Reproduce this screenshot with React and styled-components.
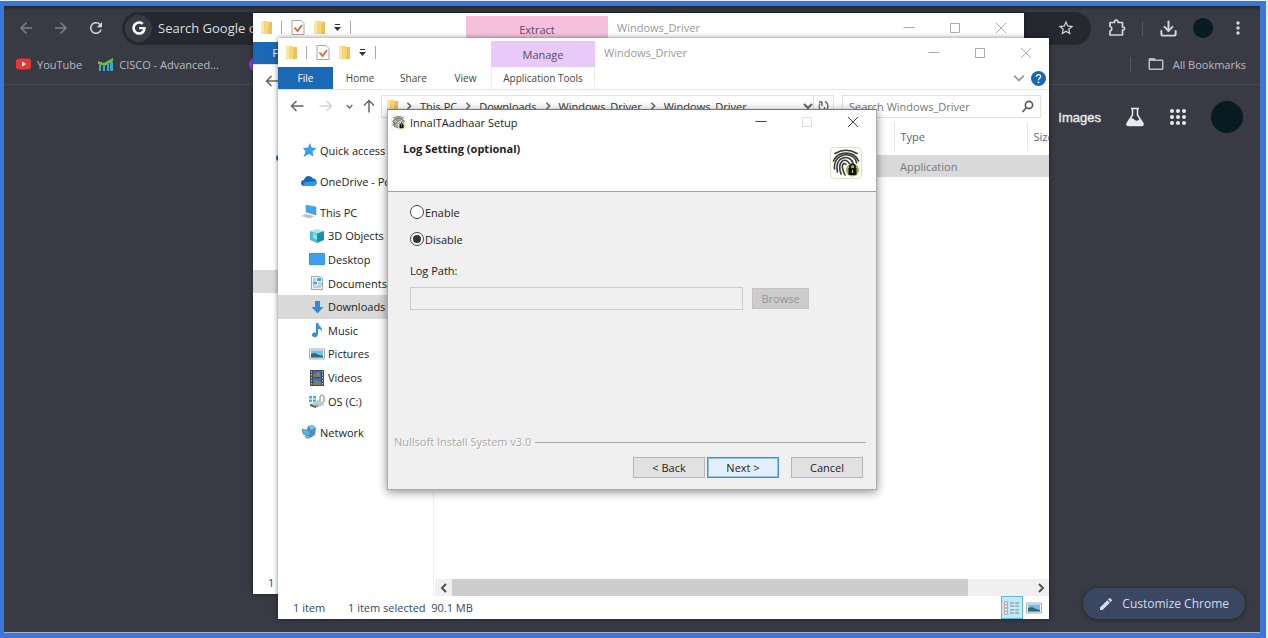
import React, { useState } from 'react';
import styled, { createGlobalStyle, css } from 'styled-components';
import { Download } from 'lucide-react';
import { FaGoogle } from 'react-icons/fa';
import {
  MdArrowBack,
  MdArrowForward,
  MdEdit,
  MdFolderOpen,
  MdMoreVert,
  MdRefresh,
  MdStarOutline,
} from 'react-icons/md';

const GlobalStyle = createGlobalStyle`
  *,
  *::before,
  *::after {
    box-sizing: border-box;
  }

  body {
    display: flow-root;
    margin: 0;
    overflow: hidden;
    background: #e4f1f8;
    font-family: 'Open Sans', 'Noto Sans', sans-serif;
    font-size: 12px;
  }

  button,
  input {
    font: inherit;
    color: inherit;
  }

  svg {
    display: block;
    flex: none;
  }
`;

const StyledFrame = styled.div`
  position: relative;
  display: flex;
  flex-direction: column;
  min-height: calc(100vh - 1px);
  margin: 1px 2px 0 0;
  border: solid #3b77d8;
  border-width: 5px 6px 5px 4px;
  background: #383b43;
  box-shadow: inset 0 4px 3px -2px #25272c, inset 0 -1px 0 #a5b3cb;
`;

const PlainButton = styled.button`
  display: flex;
  align-items: center;
  justify-content: center;
  flex: none;
  width: ${({ $width }) => $width || 24}px;
  padding: 0;
  border: 0;
  background: none;
`;

/* ---------- browser ---------- */

const StyledToolbar = styled.header`
  display: flex;
  align-items: center;
  height: 44px;
  padding: 0 10px;
  color: #d4d6dc;

  .nav {
    display: flex;
    gap: 11px;
    margin-right: 14px;
  }

  .dim {
    color: #7d8088;
  }
`;

const StyledOmnibox = styled.label`
  display: flex;
  align-items: center;
  flex: 1;
  height: 33px;
  margin-right: 14px;
  padding: 0 16px 0 3px;
  border-radius: 17px;
  background: #25282e;

  .badge {
    display: grid;
    place-items: center;
    width: 27px;
    height: 27px;
    border-radius: 50%;
    background: #383b42;
    color: #fff;
  }

  input {
    flex: 1;
    margin-left: 6px;
    padding: 0;
    border: 0;
    outline: 0;
    background: none;
    font-size: 13px;
  }

  input::placeholder {
    color: #dcdee2;
    opacity: 1;
  }
`;

const StyledDivider = styled.span`
  flex: none;
  width: 1px;
  height: ${({ $height }) => $height || 15}px;
  background: ${({ $color }) => $color || '#555862'};
`;

const StyledActions = styled.div`
  display: flex;
  align-items: center;
  gap: 13px;
`;

const Avatar = styled.button`
  flex: none;
  width: ${({ $size }) => $size}px;
  height: ${({ $size }) => $size}px;
  padding: 0;
  border: 0;
  border-radius: 50%;
  background: #061c22;
`;

const StyledBookmarks = styled.nav`
  display: flex;
  align-items: center;
  height: 35px;
  padding: 0 14px 6px 12px;
  border-bottom: 1px solid #464951;
  color: #b9bcc4;
  font-size: 11px;

  a {
    display: flex;
    align-items: center;
    gap: 6px;
    margin-right: 16px;
    color: inherit;
    text-decoration: none;
  }

  .purple {
    width: 15px;
    height: 15px;
    margin-left: 14px;
    border-radius: 50%;
    background: #8a3fe0;
  }

  .all {
    gap: 8px;
    margin: 0 0 0 16px;
  }

  ${StyledDivider} {
    margin-left: auto;
  }
`;

const StyledNewTab = styled.main`
  display: flex;
  flex: 1;
  flex-direction: column;
  align-items: flex-end;
  justify-content: space-between;
  padding: 16px 15px 14px;
`;

const StyledLinks = styled.div`
  display: flex;
  align-items: center;
  gap: 24px;
  padding-right: 2px;
  color: #e8eaee;

  a {
    color: inherit;
    font-family: 'Liberation Sans', sans-serif;
    font-size: 13px;
    -webkit-text-stroke: 0.4px;
    text-decoration: none;
  }
`;

const StyledCustomize = styled.button`
  display: flex;
  align-items: center;
  gap: 8px;
  height: 31px;
  padding: 0 16px 0 15px;
  border: 0;
  border-radius: 16px;
  background: #3b4761;
  box-shadow: 0 1px 4px #24262b;
  color: #d3dcf0;
`;

/* ---------- explorer windows ---------- */

const StyledWindow = styled.section`
  position: absolute;
  left: ${({ $x }) => $x}px;
  top: ${({ $y }) => $y}px;
  display: flex;
  flex-direction: column;
  width: ${({ $width }) => $width}px;
  height: ${({ $height }) => $height}px;
  background: #fff;
  box-shadow: 0 0 5px rgba(0, 0, 0, 0.5);
  overflow: hidden;
`;

const StyledTitleBar = styled.header`
  display: flex;
  align-items: center;
  flex: none;
  height: 29px;
  padding-left: 8px;
  color: #999;

  .quick {
    display: flex;
    align-items: center;
    gap: 9px;
    width: 205px;
  }

  h2 {
    flex: 1;
    margin: 0 0 0 9px;
    font-size: 11px;
    font-weight: 400;
  }
`;

const StyledToolTab = styled.span`
  align-self: flex-end;
  width: ${({ $wide }) => ($wide ? 142 : 104)}px;
  height: 26px;
  background: ${({ $wide }) => ($wide ? '#f5c0dc' : '#e8c9fa')};
  color: #5c4a66;
  font-size: 11px;
  line-height: 28px;
  text-align: center;
`;

const StyledRibbon = styled.nav`
  display: flex;
  align-items: stretch;
  flex: none;
  height: 23px;
  border-bottom: 1px solid #e4e4e4;

  .end {
    display: flex;
    align-items: center;
    gap: 6px;
    margin-left: auto;
    padding-right: 3px;
  }
`;

const RibbonTab = styled.button`
  width: ${({ $width }) => $width}px;
  padding: 0;
  border: 0;
  background: none;
  color: #444;
  font-size: 10px;

  ${({ $file }) =>
    $file &&
    css`
      background: #1b69b6;
      color: #fff;
    `}

  ${({ $tool }) =>
    $tool &&
    css`
      border: solid #ececec;
      border-width: 0 1px;
    `}
`;

const StyledAddressRow = styled.div`
  display: flex;
  align-items: center;
  flex: none;
  height: 32px;
  padding: 0 8px;

  .arrows {
    display: flex;
    align-items: center;
    width: 95px;
    color: #666;
  }

  .path {
    display: flex;
    align-items: center;
    flex: 1;
    height: 23px;
    padding-left: 5px;
    border: 1px solid #e2e2e2;
    color: #333;
    font-size: 11px;
  }

  .path span {
    white-space: nowrap;
  }

  .path .sep {
    width: 22px;
    padding: 0 7px;
    color: #666;
  }

  .path .space {
    flex: 1;
  }

  .refresh {
    height: 21px;
    border-left: 1px solid #e2e2e2;
  }
`;

const StyledSearch = styled.label`
  display: flex;
  align-items: center;
  width: 199px;
  height: 23px;
  margin-left: 8px;
  padding: 0 6px;
  border: 1px solid #e2e2e2;

  input {
    flex: 1;
    min-width: 0;
    padding: 0;
    border: 0;
    outline: 0;
    font-size: 11px;
  }

  input::placeholder {
    color: #777;
    opacity: 1;
  }
`;

const StyledBody = styled.div`
  display: grid;
  grid-template-columns: 156px 1fr;
  flex: 1;
  min-height: 0;
`;

const StyledSidebar = styled.nav`
  display: flex;
  flex-direction: column;
  gap: 7px;
  padding-top: 16px;
  border-right: 1px solid #f0f0f0;

  .group {
    display: grid;
    grid-auto-rows: 1fr;
    height: 213px;
  }
`;

const SideItem = styled.a`
  display: flex;
  align-items: center;
  gap: 3px;
  min-height: ${({ $nested }) => ($nested ? 23 : 24)}px;
  padding-left: ${({ $nested }) => ($nested ? 31 : 23)}px;
  background: ${({ $active }) => ($active ? '#d9d9d9' : 'none')};
  color: #222;
  font-size: 11px;
  text-decoration: none;
  white-space: nowrap;
`;

const StyledContent = styled.div`
  display: flex;
  flex-direction: column;
  justify-content: space-between;
  min-width: 0;
  padding-left: 1px;
  overflow: hidden;
`;

const StyledFileTable = styled.table`
  width: 100%;
  border-collapse: collapse;
  table-layout: fixed;
  font-size: 11px;

  th {
    height: 29px;
    padding: 0 0 0 6px;
    border-left: 1px solid #e8e8e8;
    color: #566780;
    font-weight: 400;
    text-align: left;
  }

  th:first-child {
    border: 0;
  }

  tbody::before {
    content: '';
    display: block;
    height: 4px;
  }

  td {
    height: 22px;
    padding: 0 0 0 6px;
    background: #d9d9d9;
    color: #777;
  }
`;

const StyledScrollbar = styled.div`
  display: flex;
  height: 17px;
  background: #f0f0f0;
  color: #505050;

  .thumb {
    width: 516px;
    background: #cdcdcd;
  }

  button:last-child {
    margin-left: auto;
  }
`;

const StyledStatus = styled.footer`
  display: flex;
  align-items: center;
  flex: none;
  height: 23px;
  padding: 0 4px 0 15px;
  color: #33476b;
  font-size: 11px;

  span {
    white-space: pre;
  }

  .count {
    width: 55px;
  }

  .selected {
    flex: 1;
  }
`;

const ViewButton = styled(PlainButton)`
  height: 23px;
  border: 1px solid ${({ $active }) => ($active ? '#5db8e0' : 'transparent')};
  background: ${({ $active }) => ($active ? '#c3e8f8' : 'none')};
`;

/* ---------- setup dialog ---------- */

const StyledDialog = styled(StyledWindow)`
  border: 1px solid #a9a9a9;
  border-top-color: #777;
  background: #f0f0f0;
  box-shadow: 0 2px 9px rgba(0, 0, 0, 0.45);
  color: #222;
  font-size: 11px;

  .caption {
    display: flex;
    align-items: center;
    height: 24px;
    padding-left: 3px;
    background: #fff;
  }

  .caption h2 {
    flex: 1;
    margin: 0 0 0 4px;
    font-size: 11px;
    font-weight: 400;
  }

  .heading {
    display: flex;
    justify-content: space-between;
    height: 58px;
    padding: 7px 14px 0 15px;
    border-bottom: 1px solid #a0a0a0;
    background: #fff;
  }

  .heading h3 {
    margin: 0;
    font-size: 11px;
    line-height: 15px;
  }

  .heading svg {
    margin-top: 6px;
  }
`;

const StyledForm = styled.form`
  display: flex;
  flex: 1;
  flex-direction: column;
  padding: 10px 10px 11px 22px;

  .path-label {
    margin-top: 12px;
    line-height: 20px;
  }

  .path-row {
    display: flex;
    gap: 9px;
    margin-top: 6px;
  }

  .path-row input {
    width: 333px;
    height: 23px;
    border: 1px solid #ccc;
    background: #f0f0f0;
  }

  .brand {
    display: flex;
    align-items: center;
    gap: 4px;
    margin: auto 0 0 -16px;
    color: #a9a9a9;
    line-height: 16px;
    text-shadow: 1px 1px #fff;
  }

  .brand::after {
    content: '';
    flex: 1;
    height: 1px;
    background: #a6a6a6;
  }

  .buttons {
    display: flex;
    justify-content: flex-end;
    gap: 2px;
    margin: 7px 3px 0 0;
  }

  .buttons button:last-child {
    margin-left: 10px;
  }
`;

const RadioLabel = styled.label`
  display: flex;
  align-items: center;
  gap: 1px;
  height: 20px;
  margin-bottom: 7px;

  & + & {
    margin-bottom: 0;
  }

  input {
    display: grid;
    place-items: center;
    width: 14px;
    height: 14px;
    margin: 0;
    border: 1px solid #444;
    border-radius: 50%;
    background: #fff;
    appearance: none;
  }

  input:checked::before {
    content: '';
    width: 8px;
    height: 8px;
    border-radius: 50%;
    background: #333;
  }
`;

const DialogButton = styled.button`
  width: ${({ $small }) => ($small ? 57 : 72)}px;
  height: 21px;
  padding: 0;
  border: 1px solid ${({ $primary }) => ($primary ? '#3c8fdc' : '#b5b5b5')};
  background: ${({ $primary }) => ($primary ? '#e3f0fb' : '#e1e1e1')};
  box-shadow: ${({ $primary }) => ($primary ? 'inset 0 0 0 1px #8fc1ee' : 'none')};

  &:disabled {
    margin-top: 1px;
    border-color: #c4c4c4;
    background: #ccc;
    color: #949494;
  }
`;

/* ---------- drawings ---------- */

const FolderIcon = () => (
  <svg width="11" height="15" viewBox="0 0 11 15">
    <path d="M0 1h7l1 1h3v12H0z" fill="#f7d678" />
    <path d="M0 1h3v12l2 2-5-2z" fill="#fbe7a6" />
    <path d="M8 2h3v12H7z" fill="#ecc05a" />
  </svg>
);

const CheckDocIcon = () => (
  <svg width="14" height="15" viewBox="0 0 14 15" fill="none">
    <path d="M1 .5h9l3 3v11H1z" fill="#fff" stroke="#a5a5a5" />
    <path d="M3.500 7.500l3 3.500 4.500-6" stroke="#e2643a" strokeWidth="1.800" />
  </svg>
);

const CaretIcon = () => (
  <svg width="7" height="7" viewBox="0 0 7 7" fill="#333">
    <path d="M1 0h5v1H1zM0 3h7L3.500 7z" />
  </svg>
);

const CHEVRONS = {
  down: 'M1 3l4 4 4-4',
  left: 'M7 1L3 5l4 4',
  right: 'M3 1l4 4-4 4',
};

const Chevron = ({ dir, size = 10, color = 'currentColor', weight = 1.5 }) => (
  <svg width={size} height={size} viewBox="0 0 10 10" fill="none" stroke={color} strokeWidth={weight}>
    <path d={CHEVRONS[dir]} />
  </svg>
);

const ArrowIcon = ({ turn = 0, color = '#666' }) => (
  <svg width="14" height="14" viewBox="0 0 14 14" fill="none" stroke={color} strokeWidth="1.500">
    <path d="M13.500 7H1.500M6.500 2L1.500 7l5 5" transform={`rotate(${turn} 7 7)`} />
  </svg>
);

const RefreshIcon = () => (
  <svg width="11" height="12" viewBox="0 0 11 12" fill="none" stroke="#666" strokeWidth="1.400">
    <path d="M4 2v4M1 2h3.500M2 3.500C.5 6 1 9 3.500 10.500M7 1.500C10.500 3 11 8 8 10.500M6.500 7v3.500H10" />
  </svg>
);

const SearchIcon = () => (
  <svg width="13" height="13" viewBox="0 0 13 13" fill="none" stroke="#555" strokeWidth="1.600">
    <circle cx="8" cy="5" r="3.600" />
    <path d="M5.500 7.500L1.500 12" />
  </svg>
);

const HelpIcon = () => (
  <svg width="15" height="15" viewBox="0 0 15 15">
    <circle cx="7.500" cy="7.500" r="7.500" fill="#1767b8" />
    <path d="M5.300 5.800C5.300 2.800 9.700 2.900 9.700 5.600 9.700 7.300 7.500 7.300 7.500 9.200" fill="none" stroke="#fff" strokeWidth="1.300" />
    <circle cx="7.500" cy="11.300" r=".9" fill="#fff" />
  </svg>
);

const YouTubeIcon = () => (
  <svg width="15" height="12" viewBox="0 0 15 12">
    <rect y=".5" width="15" height="11" rx="3" fill="#ec3434" />
    <path d="M6 3.500L10 6 6 8.500z" fill="#fff" />
  </svg>
);

const ChartIcon = () => (
  <svg width="15" height="13" viewBox="0 0 15 13">
    <path d="M1 7h2v6H1zM5 8h2v5H5zM9 6h2v7H9zM12 4h3v9h-3z" fill="#38a9c9" />
    <path d="M0 3l6 2 9-5v3L6.500 8 0 6z" fill="#6fbf3c" />
  </svg>
);

const PuzzleIcon = () => (
  <svg width="18" height="18" viewBox="0 0 18 18">
    <path
      d="M2 3.500h4.500V3a1.800 1.800 0 013.600 0v.5h4.400V8h.5a1.600 1.600 0 010 3.200h-.5V16H2v-4a2.300 2.300 0 000-4.500z"
      fill="none"
      stroke="currentColor"
      strokeWidth="1.700"
      strokeLinejoin="round"
    />
  </svg>
);

const FlaskIcon = () => (
  <svg width="20" height="20" viewBox="0 0 20 20" fill="none">
    <path d="M6 1.500h8M7.500 2v6L2 16.500Q1.500 18.500 3.500 18.500h13q2 0 1.500-2L12.500 8V2" stroke="#e8eaee" strokeWidth="1.500" />
    <path d="M5.500 11q2.500 0 4.500 2t5-1l3 5q0 1.500-2 1.500h-13q-2 0-1-2z" fill="#e8eaee" />
  </svg>
);

const AppsIcon = () => (
  <svg width="18" height="18" viewBox="0 0 18 18" fill="currentColor">
    {[3, 9, 15].map(cy => [3, 9, 15].map(cx => <circle key={`${cx}-${cy}`} cx={cx} cy={cy} r="2" />))}
  </svg>
);

const SIDE_DRAWINGS = {
  star: <path d="M9 1l1.500 4.500 5 .5-4 3.500 1 5-4.500-2.500L2.500 15l2-5.500L2 6l5-.5z" fill="#36a0ee" />,
  cloud: (
    <>
      <path d="M3 13a3 3 0 010-6c1-5 7-5 9-1.500 5 0 5 7.500 0 7.500z" fill="#1769c0" />
      <path d="M3 13C1 9 6 8 8 9l6-1c3 2 1 5-2 5z" fill="#2c9be8" />
    </>
  ),
  pc: (
    <>
      <path d="M5 1l10 2v8L5 8z" fill="#3aa6ee" stroke="#7b8fa0" strokeWidth=".6" />
      <path d="M0 12l5-2 8 2-4 2.500z" fill="#b9c1c8" />
    </>
  ),
  cube: (
    <>
      <path d="M8 1l7 2-7 2.500L1 3z" fill="#a5e8f0" />
      <path d="M1 3l7 2.500V15l-7-3z" fill="#49bdd2" />
      <path d="M15 3L8 5.500V15l7-3z" fill="#198fa9" />
      <path d="M4 5l4 2v5l-4-2z" fill="#8be2ec" />
    </>
  ),
  desktop: (
    <>
      <rect x="0" y="2" width="16" height="12" rx="1" fill="#2f95ea" />
      <path d="M1 3h14v10H1z" fill="#3fa0f2" />
    </>
  ),
  doc: (
    <>
      <path d="M2.500 1.500h9l2 2v11h-11z" fill="#eef3f7" stroke="#9aa8b4" />
      <path d="M4 4h3M4 6h3M9 8h4M4 10h3M9 10h4M4 12h8" stroke="#86aecb" />
      <path d="M8 3h4v3H8zM4 7h4v2H4z" fill="#4ea2d8" />
    </>
  ),
  down: <path d="M6 2h5v6h3.500l-6 6.500L2.500 8H6z" fill="#2b8be0" />,
  music: <path d="M7 1h2c0 3 5 4 4 9-1-3-2-3-4-3v5c0 4-6 4-6 1 0-2 2-3 4-2z" fill="#2b8fe4" />,
  picture: (
    <>
      <path d="M.5 3h15v10H.5z" fill="#eef4f8" stroke="#a2afb8" />
      <path d="M2 4.500h12v7H2z" fill="#78bce8" />
      <path d="M2 11.500V8l4-1 4 2 4 1v1.500z" fill="#2e6674" />
    </>
  ),
  video: (
    <>
      <path d="M1 0h14v16H1z" fill="#474a55" />
      <path d="M4 1h8v6H4z" fill="#2f70c8" />
      <path d="M4 8h8v7H4z" fill="#3a6dc1" />
      <path d="M4 5l4-2 4 3v1H4zM4 13l5-2 3 1v3H4z" fill="#6f8a52" />
      <path d="M7 4l2-2 2 3zM5 11l2-1 2 2z" fill="#d27a3c" />
      <path d="M2.500 1v15M13.500 1v15" stroke="#bfc3ca" strokeDasharray="1.500 1.500" />
    </>
  ),
  drive: (
    <>
      <path d="M0 3h3v2.500H0zM4 3h3v2.500H4zM0 6.500h3V9H0zM4 6.500h3V9H4z" fill="#35b3e8" />
      <path d="M1 11l8-4 6 2v3l-8 3-6-2z" fill="#c3c9cd" />
      <path d="M1 11l6 2v2l-6-2z" fill="#5c646b" />
      <path d="M11 8V4q2-4 4 0v5" fill="none" stroke="#a9aeb3" strokeWidth="1.600" />
      <circle cx="8" cy="12.500" r="1" fill="#50b65a" />
    </>
  ),
  network: (
    <>
      <path d="M7 2l5-1 3 3-1 7-5 3-5-3z" fill="#4f8fbf" />
      <path d="M8 2l4-1 2 3-4 2z" fill="#7cc3e8" />
      <path d="M1 5l8 2v5l-7-2z" fill="#56b8e6" stroke="#367ca6" strokeWidth=".6" />
      <path d="M3 12l5 0 2 2-4 1z" fill="#8fa9ba" />
    </>
  ),
};

const SideIcon = ({ name }) => (
  <svg width="16" height="16" viewBox="0 0 16 16">
    {SIDE_DRAWINGS[name]}
  </svg>
);

const DetailsIcon = () => (
  <svg width="16" height="14" viewBox="0 0 16 14" fill="none">
    <path d="M.5.500h3v13h-3z" fill="#f6eeee" stroke="#b8a8a8" />
    <path d="M6 2h4M11 2h4M6 5h4M11 5h4M6 9h4M11 9h4M6 12h4M11 12h4" stroke="#7d8a93" />
    <path d="M1.500 3.500h1M1.500 7h1M1.500 10.500h1" stroke="#d24a3c" strokeWidth="1.500" />
  </svg>
);

const FingerprintIcon = ({ size }) => (
  <svg width={size} height={size} viewBox="0 0 32 32" fill="none">
    <rect x=".5" y=".5" width="31" height="31" rx="4" fill="#fdfdfa" stroke="#dcdfcd" />
    <g stroke="#3a3a3a" strokeWidth="1.600" strokeLinecap="round">
      <path d="M5 6.500Q16 0 27 6.500" />
      <path d="M3.500 14C8 3.500 24 3.500 28.500 14" />
      <path d="M4.500 22C3 4.500 25 4 26.500 16" />
      <path d="M7.500 25C4 8.500 20 7 23 16" />
      <path d="M11 27C6.500 13.500 16 9.500 19.500 17" />
      <path d="M15 28C10.500 19 12.500 14.500 16 17.500" />
    </g>
    <circle cx="22.500" cy="23" r="6.500" fill="#9db43f" />
    <path d="M20 21v-2q2.500-4 5 0v2" stroke="#111" strokeWidth="1.700" />
    <path d="M18.500 21h8v7h-8z" fill="#111" />
    <path d="M22.500 23v3" stroke="#b9c878" strokeWidth="1.200" />
  </svg>
);

const CONTROL_PATHS = {
  Minimize: 'M.5 5.500h11',
  Maximize: 'M1.500 1.500h9v9h-9z',
  Close: 'M1 1l10 10M11 1L1 11',
};

const WindowControls = ({ color, fadedMax }) =>
  Object.entries(CONTROL_PATHS).map(([name, d]) => (
    <PlainButton key={name} type="button" aria-label={name} $width={46}>
      <svg width="12" height="12" viewBox="0 0 12 12" fill="none">
        <path d={d} stroke={fadedMax && name === 'Maximize' ? '#ddd' : color} />
      </svg>
    </PlainButton>
  ));

/* ---------- sections ---------- */

const PC_ITEMS = [
  ['This PC', 'pc'],
  ['3D Objects', 'cube'],
  ['Desktop', 'desktop'],
  ['Documents', 'doc'],
  ['Downloads', 'down'],
  ['Music', 'music'],
  ['Pictures', 'picture'],
  ['Videos', 'video'],
  ['OS (C:)', 'drive'],
];

const CRUMBS = ['This PC', 'Downloads', 'Windows_Driver', 'Windows_Driver'];

const TitleBar = ({ tab, wideTab }) => (
  <StyledTitleBar>
    <div className="quick">
      <FolderIcon />
      <StyledDivider $color="#aaa" $height={13} />
      <CheckDocIcon />
      <FolderIcon />
      <CaretIcon />
      <StyledDivider $color="#aaa" $height={13} />
    </div>
    <StyledToolTab $wide={wideTab}>{tab}</StyledToolTab>
    <h2>Windows_Driver</h2>
    <WindowControls color="#aaa" />
  </StyledTitleBar>
);

// sits behind the active window, so only its top and left edges carry content
const InactiveExplorer = () => (
  <StyledWindow $x={249} $y={7} $width={771} $height={581}>
    <TitleBar tab="Extract" wideTab />
    <StyledRibbon>
      <RibbonTab $width={55} $file>
        File
      </RibbonTab>
    </StyledRibbon>
    <StyledAddressRow>
      <div className="arrows">
        <PlainButton aria-label="Back" $width={22}>
          <ArrowIcon />
        </PlainButton>
      </div>
    </StyledAddressRow>
    <StyledBody>
      <StyledSidebar>
        <SideItem as="span" />
        <SideItem as="span">
          <SideIcon name="cloud" />
        </SideItem>
        <div className="group">
          {PC_ITEMS.map(([label]) => (
            <SideItem key={label} as="span" $nested $active={label === 'Downloads'} />
          ))}
        </div>
      </StyledSidebar>
    </StyledBody>
    <StyledStatus>
      <span className="count">1</span>
    </StyledStatus>
  </StyledWindow>
);

const Explorer = () => (
  <StyledWindow $x={274} $y={32} $width={771} $height={581}>
    <TitleBar tab="Manage" />

    <StyledRibbon>
      <RibbonTab $width={55} $file>
        File
      </RibbonTab>
      <RibbonTab $width={54}>Home</RibbonTab>
      <RibbonTab $width={53}>Share</RibbonTab>
      <RibbonTab $width={51}>View</RibbonTab>
      <RibbonTab $width={104} $tool>
        Application Tools
      </RibbonTab>
      <div className="end">
        <Chevron dir="down" size={12} color="#999" />
        <HelpIcon />
      </div>
    </StyledRibbon>

    <StyledAddressRow>
      <div className="arrows">
        <PlainButton aria-label="Back" $width={22}>
          <ArrowIcon />
        </PlainButton>
        <PlainButton aria-label="Forward" $width={36}>
          <ArrowIcon turn={180} color="#d5d5d5" />
        </PlainButton>
        <PlainButton aria-label="Recent" $width={10}>
          <Chevron dir="down" size={7} weight={2} />
        </PlainButton>
        <PlainButton aria-label="Up" $width={30}>
          <ArrowIcon turn={90} />
        </PlainButton>
      </div>
      <div className="path">
        <FolderIcon />
        {CRUMBS.map((crumb, i) => (
          <React.Fragment key={i}>
            <span className="sep">
              <Chevron dir="right" size={8} weight={2} />
            </span>
            <span>{crumb}</span>
          </React.Fragment>
        ))}
        <span className="space" />
        <Chevron dir="down" weight={2} color="#666" />
        <PlainButton className="refresh" aria-label="Refresh" $width={20}>
          <RefreshIcon />
        </PlainButton>
      </div>
      <StyledSearch>
        <input placeholder="Search Windows_Driver" aria-label="Search Windows_Driver" />
        <SearchIcon />
      </StyledSearch>
    </StyledAddressRow>

    <StyledBody>
      <StyledSidebar>
        <SideItem href="#quick">
          <SideIcon name="star" />
          Quick access
        </SideItem>
        <SideItem href="#onedrive">
          <SideIcon name="cloud" />
          OneDrive - Pe
        </SideItem>
        <div className="group">
          {PC_ITEMS.map(([label, icon], i) => (
            <SideItem key={label} href={`#${icon}`} $nested={i > 0} $active={label === 'Downloads'}>
              <SideIcon name={icon} />
              {label}
            </SideItem>
          ))}
        </div>
        <SideItem href="#network">
          <SideIcon name="network" />
          Network
        </SideItem>
      </StyledSidebar>

      <StyledContent>
        <StyledFileTable>
          <colgroup>
            <col />
            <col width="133" />
            <col width="22" />
          </colgroup>
          <thead>
            <tr>
              <th aria-label="Name" />
              <th>Type</th>
              <th>Size</th>
            </tr>
          </thead>
          <tbody>
            <tr>
              <td />
              <td>Application</td>
              <td />
            </tr>
          </tbody>
        </StyledFileTable>
        <StyledScrollbar>
          <PlainButton aria-label="Scroll left" $width={17}>
            <Chevron dir="left" weight={2} />
          </PlainButton>
          <div className="thumb" />
          <PlainButton aria-label="Scroll right" $width={17}>
            <Chevron dir="right" weight={2} />
          </PlainButton>
        </StyledScrollbar>
      </StyledContent>
    </StyledBody>

    <StyledStatus>
      <span className="count">1 item</span>
      <span className="selected">1 item selected  90.1 MB</span>
      <ViewButton aria-label="Details" $width={22} $active>
        <DetailsIcon />
      </ViewButton>
      <ViewButton aria-label="Large icons" $width={22}>
        <SideIcon name="picture" />
      </ViewButton>
    </StyledStatus>
  </StyledWindow>
);

const SetupDialog = () => {
  const [logging, setLogging] = useState('Disable');

  return (
    <StyledDialog as="div" role="dialog" aria-label="InnaITAadhaar Setup" $x={383} $y={103} $width={490} $height={381}>
      <div className="caption">
        <FingerprintIcon size={15} />
        <h2>InnaITAadhaar Setup</h2>
        <WindowControls color="#444" fadedMax />
      </div>
      <div className="heading">
        <h3>Log Setting (optional)</h3>
        <FingerprintIcon size={32} />
      </div>
      <StyledForm onSubmit={e => e.preventDefault()}>
        {['Enable', 'Disable'].map(value => (
          <RadioLabel key={value}>
            <input type="radio" name="log" checked={logging === value} onChange={() => setLogging(value)} />
            {value}
          </RadioLabel>
        ))}
        <label className="path-label" htmlFor="log-path">
          Log Path:
        </label>
        <div className="path-row">
          <input id="log-path" disabled={logging === 'Disable'} />
          <DialogButton type="button" $small disabled={logging === 'Disable'}>
            Browse
          </DialogButton>
        </div>
        <div className="brand">Nullsoft Install System v3.0</div>
        <div className="buttons">
          <DialogButton type="button">&lt; Back</DialogButton>
          <DialogButton $primary>Next &gt;</DialogButton>
          <DialogButton type="button">Cancel</DialogButton>
        </div>
      </StyledForm>
    </StyledDialog>
  );
};

const App = () => (
  <>
    <GlobalStyle />
    <StyledFrame>
      <StyledToolbar>
        <div className="nav">
          <PlainButton className="dim" aria-label="Back">
            <MdArrowBack size={18} />
          </PlainButton>
          <PlainButton className="dim" aria-label="Forward">
            <MdArrowForward size={18} />
          </PlainButton>
          <PlainButton aria-label="Reload">
            <MdRefresh size={18} />
          </PlainButton>
        </div>
        <StyledOmnibox>
          <span className="badge">
            <FaGoogle size={14} />
          </span>
          <input placeholder="Search Google or type a URL" aria-label="Address" />
          <MdStarOutline size={18} />
        </StyledOmnibox>
        <StyledActions>
          <PlainButton aria-label="Extensions">
            <PuzzleIcon />
          </PlainButton>
          <StyledDivider />
          <PlainButton aria-label="Downloads">
            <Download size={19} strokeWidth={2.5} />
          </PlainButton>
          <Avatar $size={20} aria-label="Profile" />
          <PlainButton aria-label="Menu">
            <MdMoreVert size={20} />
          </PlainButton>
        </StyledActions>
      </StyledToolbar>

      <StyledBookmarks>
        <a href="#youtube">
          <YouTubeIcon />
          YouTube
        </a>
        <a href="#cisco">
          <ChartIcon />
          CISCO - Advanced...
        </a>
        <span className="purple" />
        <StyledDivider />
        <a className="all" href="#bookmarks">
          <MdFolderOpen size={18} />
          All Bookmarks
        </a>
      </StyledBookmarks>

      <StyledNewTab>
        <StyledLinks>
          <a href="#images">Images</a>
          <FlaskIcon />
          <AppsIcon />
          <Avatar $size={32} aria-label="Account" />
        </StyledLinks>
        <StyledCustomize>
          <MdEdit size={16} />
          Customize Chrome
        </StyledCustomize>
      </StyledNewTab>

      <InactiveExplorer />
      <Explorer />
      <SetupDialog />
    </StyledFrame>
  </>
);

export default App;
